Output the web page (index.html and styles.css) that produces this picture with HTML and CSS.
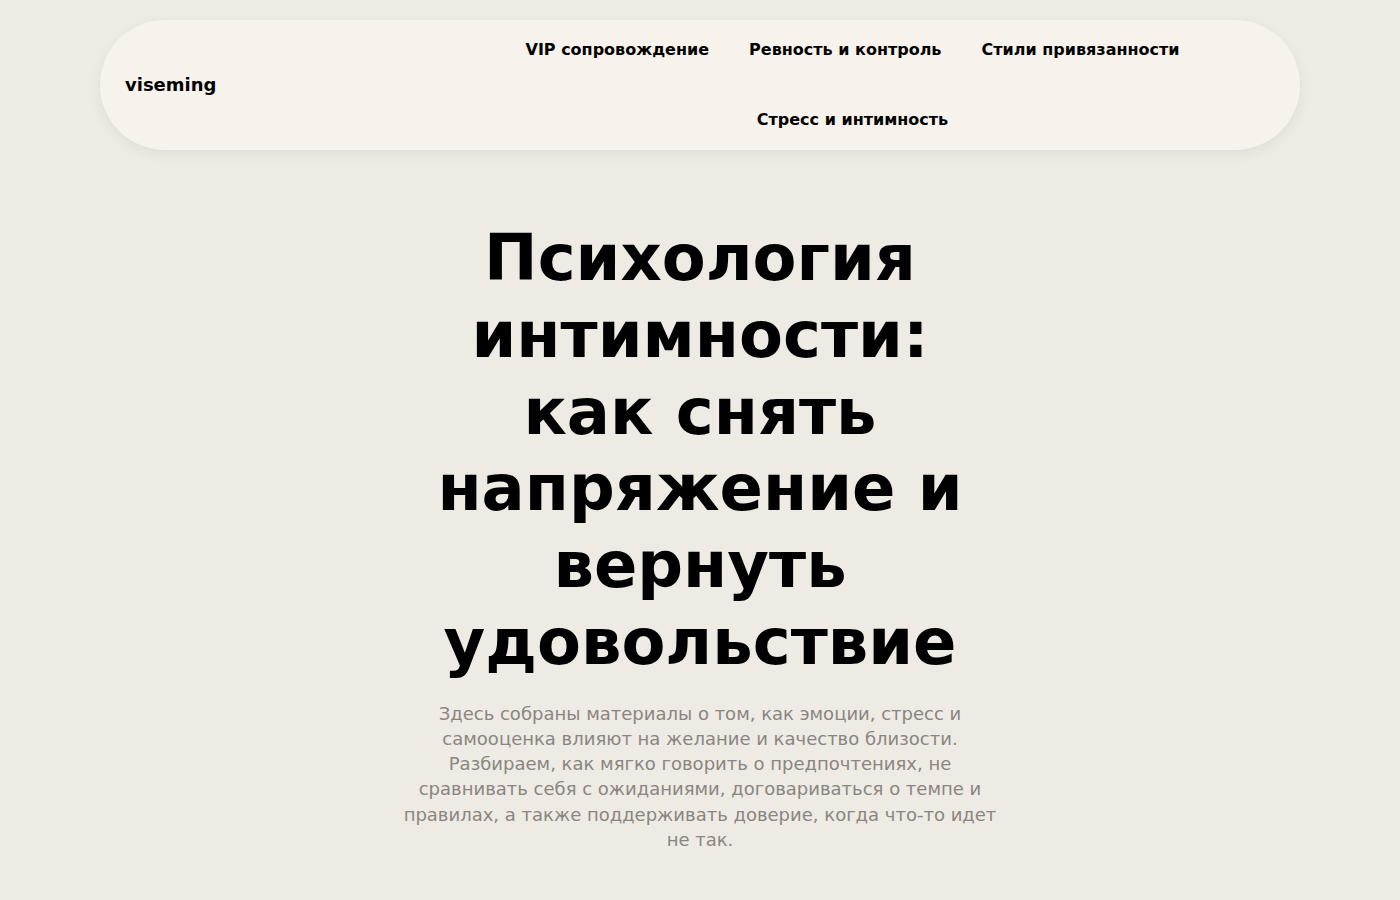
FILE: index.html
```html
<!DOCTYPE html>
<html lang="ru">
<head>
  <meta charset="UTF-8" />
  <meta name="viewport" content="width=device-width, initial-scale=1.0" />
  <title>viseming — Психология интимности</title>
  <link rel="stylesheet" href="styles.css">
</head>
<body>
  <header class="site-header">
    <a class="logo" href="#">viseming</a>
    <nav class="main-nav">
      <a href="#">VIP сопровождение</a>
      <a href="#">Ревность и контроль</a>
      <a href="#">Стили привязанности</a>
      <a href="#">Стресс и интимность</a>
    </nav>
  </header>

  <main class="hero">
    <h1>Психология интимности: как снять напряжение и вернуть удовольствие</h1>
    <p class="lead">
      Здесь собраны материалы о том, как эмоции, стресс и самооценка влияют на желание и качество близости.
      Разбираем, как мягко говорить о предпочтениях, не сравнивать себя с ожиданиями, договариваться о темпе
      и правилах, а также поддерживать доверие, когда что-то идет не так.
    </p>
  </main>
</body>
</html>
```

FILE: styles.css
```css
body {
  margin: 0;
  font-family: 'DejaVu Sans', Verdana, sans-serif;
  background: #eeebe5;
  color: #000;
}

a {
  color: inherit;
  text-decoration: none;
}

.site-header {
  width: 1200px;
  height: 130px;
  margin: 20px auto 0;
  padding: 0 25px 2px;
  box-sizing: border-box;
  background: #f7f3ec;
  border-radius: 65px;
  box-shadow: 0 4px 14px rgba(0, 0, 0, 0.06);
  display: flex;
  align-items: center;
}

.logo {
  font-size: 18px;
  font-weight: bold;
}

.main-nav {
  width: 845px;
  margin-left: auto;
  display: flex;
  flex-wrap: wrap;
  justify-content: center;
  column-gap: 40px;
  row-gap: 51px;
}

.main-nav a {
  font-size: 16px;
  font-weight: bold;
  line-height: 19px;
}

.hero {
  max-width: 600px;
  margin: 0 auto;
  padding-top: 70px;
  text-align: center;
}

h1 {
  margin: 0;
  font-size: 64px;
  line-height: 1.2;
  font-weight: bold;
}

.lead {
  margin: 20px 0 0;
  font-size: 18px;
  line-height: 25.2px;
  color: #8a8580;
}
```
